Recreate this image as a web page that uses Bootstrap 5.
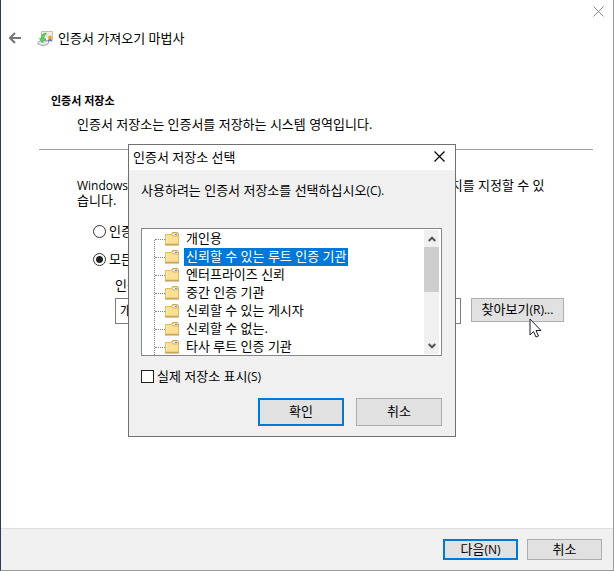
<!DOCTYPE html>
<html lang="ko">
<head>
<meta charset="utf-8">
<meta name="viewport" content="width=device-width, initial-scale=1">
<title>인증서 가져오기 마법사</title>
<link href="https://cdn.jsdelivr.net/npm/bootstrap@5.3.0/dist/css/bootstrap.min.css" rel="stylesheet">
<style>
  body { font: 13px/18px "Open Sans", "Noto Sans CJK KR", sans-serif; color: #000; background: #fff; }
  .latin-s { font-size: 12px; }
  .wizard { border: 1px solid #9b9b9b; border-width: 0 1px 1px; border-left-color: #2b3a55; }
  .top-strip { height: 24px; padding: 6px 9px 0; }
  .plain-btn { border: 0; padding: 0; background: none; line-height: 0; }
  .head { height: 28px; padding-left: 8px; gap: 16px; }
  .content { padding: 40px 20px 0 38px; }
  .section-title { font-size: 11px; line-height: 18px; font-weight: 700; margin: 0; padding-left: 12px; }
  .section-text { margin: 5px 0 0; padding-left: 38px; }
  .rule { border: 0; border-top: 1px solid #a0a0a0; opacity: 1; margin: 16px 0 0; }
  .options { padding: 28px 29px 0 38px; }
  .options p { line-height: 15px; margin: 0 14px 0 0; }
  .choice { height: 18px; gap: 3px; margin-left: 16px; }
  .choice input { appearance: none; width: 13px; height: 13px; margin: 0; border: 1px solid #333; border-radius: 50%; background: #fff; flex: none; }
  .choice input:checked { background: radial-gradient(circle, #222 0 3px, #fff 4px); }
  .choice-first { margin-top: 14px; }
  .choice-next { margin-top: 10px; }
  .store { padding: 8px 0 0 38px; }
  .store-row { gap: 10px; margin-top: 4px; }
  .store input { min-width: 0; height: 26px; border: 1px solid #7a7a7a; border-radius: 0; padding: 0 4px 4px; font-size: 13px; color: #000; }
  .win-btn { border: 1px solid #adadad; border-radius: 0; background: #e1e1e1; color: #000; padding: 0 0 2px; font-size: 13px; line-height: 18px; }
  .win-btn.main { border: 2px solid #0078d7; }
  .win-btn.browse { width: 93px; height: 24px; flex: none; }
  .foot { background: #f0f0f0; border-top: 1px solid #dfdfdf; height: 42px; padding: 0 11px; gap: 9px; }
  .foot .win-btn { width: 75px; height: 21px; line-height: 16px; }
  .picker { position: absolute; left: 127px; top: 144px; width: 328px; background: #f0f0f0; border: 1px solid #707070; z-index: 2; }
  .picker-title { background: #fff; height: 25px; padding: 0 10px 2px 4px; }
  .picker-title h2 { font-size: 13px; line-height: 18px; font-weight: 400; margin: 0; }
  .picker-body { padding: 11px 13px 10px 12px; }
  .tree-box { margin-top: 28px; height: 128px; border: 1px solid #828790; background: #fff; padding: 1px 2px 0 12px; }
  .tree { line-height: 16px; margin: 0; background: repeating-linear-gradient(#808080 0 1px, transparent 1px 2px) 0 10px / 1px 100% no-repeat; }
  .tree li { height: 18px; padding-left: 1px; }
  .tree li::before { content: ""; width: 10px; align-self: center; border-top: 1px dotted #808080; flex: none; }
  .tree svg { margin: 0 5px 0 0; flex: none; }
  .tree span { padding: 0 2px 2px; }
  .tree .chosen span { background: #0078d7; color: #fff; }
  .scroller { width: 15px; background: #f0f0f0; margin-bottom: 1px; }
  .scroller button { height: 17px; }
  .thumb { height: 45px; background: #cdcdcd; }
  .show-real { margin-top: 11px; gap: 3px; }
  .show-real input { appearance: none; width: 13px; height: 13px; margin: 0; border: 1px solid #222; background: #fff; }
  .picker-actions { gap: 12px; margin-top: 12px; }
  .picker-actions .win-btn { width: 86px; height: 28px; }
  .pointer { position: absolute; left: 528px; top: 318px; z-index: 3; }
</style>
<script src="https://cdn.jsdelivr.net/npm/bootstrap@5.3.0/dist/js/bootstrap.bundle.min.js"></script>
</head>
<body>
<svg width="0" height="0" class="position-absolute" aria-hidden="true">
  <symbol id="folder" viewBox="0 0 14 14">
    <path d="M6 3.5L7.5 .5H12.5L13.5 2V5H6Z" fill="#f3dc9a" stroke="#c9a659"/>
    <path d="M8 2.5H12.500" stroke="#fff"/><path d="M10 2.500H12" stroke="#4f9ac4"/>
    <path d="M.5 2.5H6.5L8 4H13.5V12.5H.5Z" fill="#fadf94" stroke="#dcba6a"/>
    <path d="M1.5 4V11.5" stroke="#fff0b8"/><path d="M1 11.5H13" stroke="#f3cf7c"/>
    <path d="M0 13H14" stroke="#b99146"/>
  </symbol>
</svg>
<div class="wizard min-vh-100 d-flex flex-column position-relative">
  <div class="top-strip d-flex justify-content-end align-items-start">
    <button type="button" class="plain-btn" aria-label="닫기"><svg width="11" height="11" viewBox="0 0 11 11"><path d="M.5 .5L10.500 10.500M10.500 .5L.5 10.500" stroke="#888" fill="none"/></svg></button>
  </div>
  <header class="head d-flex align-items-center">
    <button type="button" class="plain-btn" aria-label="뒤로"><svg width="12" height="12" viewBox="0 0 12 12"><path d="M12 6H1.200M6 1L1 6L6 11" stroke="#757575" stroke-width="2" fill="none"/></svg></button>
    <div class="d-flex align-items-center gap-1">
      <svg width="17" height="17" viewBox="0 0 17 17" aria-hidden="true">
        <path d="M4.500 1.500H15.500V10.500H4.500Z" fill="#f5f1e6" stroke="#c7bfad"/>
        <path d="M8 4H13M9 6H11" stroke="#e4dccd"/>
        <path d="M1 12L5 10L12 11L11 14L6 16L1 14Z" fill="#d3d7d8" stroke="#9aa0a0" stroke-width=".8"/>
        <path d="M2 12.500L7 14L11 12" stroke="#f7f8f8" fill="none"/>
        <path d="M8 3C5 4 4 6 4.500 8.500L2.500 8.500L5 12.500L9 9L7 8.700C6.500 7 7.500 5 9.500 3.500Z" fill="#5bd45f" stroke="#2fa843" stroke-width=".6"/>
        <path d="M12 8L11 12L13 10.500L15 12L14 8Z" fill="#4263bd"/>
        <circle cx="13" cy="7.500" r="2" fill="#eea52c"/>
      </svg>
      <span>인증서 가져오기 마법사</span>
    </div>
  </header>
  <main class="content flex-grow-1">
    <h1 class="section-title">인증서 저장소</h1>
    <p class="section-text">인증서 저장소는 인증서를 저장하는 시스템 영역입니다.</p>
    <hr class="rule">
    <form class="options">
      <p><span class="latin-s">Windows</span>가 자동으로 인증서 저장소를 선택하거나 사용자가 인증서 위치를 지정할 수 있습니다.</p>
      <div class="choice choice-first d-flex align-items-center"><input type="radio" name="where" id="auto"><label for="auto">인증서 종류 기준으로 자동 선택</label></div>
      <div class="choice choice-next d-flex align-items-center"><input type="radio" name="where" id="manual" checked><label for="manual">모든 인증서를 다음 저장소에 저장</label></div>
      <div class="store">
        <label for="store" class="d-block">인증서 저장소:</label>
        <div class="store-row d-flex align-items-start">
          <input id="store" type="text" class="flex-grow-1" value="개인용" readonly>
          <button type="button" class="win-btn browse">찾아보기<span class="latin-s">(R)...</span></button>
        </div>
      </div>
    </form>
  </main>
  <footer class="foot d-flex align-items-center justify-content-end">
    <button type="button" class="win-btn main">다음<span class="latin-s">(N)</span></button>
    <button type="button" class="win-btn">취소</button>
  </footer>

  <section class="picker" role="dialog" aria-labelledby="picker-name">
    <div class="picker-title d-flex align-items-center justify-content-between">
      <h2 id="picker-name">인증서 저장소 선택</h2>
      <button type="button" class="plain-btn" aria-label="닫기"><svg width="11" height="11" viewBox="0 0 11 11"><path d="M.5 .5L10.500 10.500M10.500 .5L.5 10.500" stroke="#000" stroke-width="1.200" fill="none"/></svg></button>
    </div>
    <div class="picker-body">
      <div>사용하려는 인증서 저장소를 선택하십시오<span class="latin-s">(C).</span></div>
      <div class="tree-box d-flex">
        <ul class="tree list-unstyled flex-grow-1">
          <li class="d-flex align-items-center"><svg width="14" height="14"><use href="#folder"/></svg><span>개인용</span></li>
          <li class="d-flex align-items-center chosen"><svg width="14" height="14"><use href="#folder"/></svg><span>신뢰할 수 있는 루트 인증 기관</span></li>
          <li class="d-flex align-items-center"><svg width="14" height="14"><use href="#folder"/></svg><span>엔터프라이즈 신뢰</span></li>
          <li class="d-flex align-items-center"><svg width="14" height="14"><use href="#folder"/></svg><span>중간 인증 기관</span></li>
          <li class="d-flex align-items-center"><svg width="14" height="14"><use href="#folder"/></svg><span>신뢰할 수 있는 게시자</span></li>
          <li class="d-flex align-items-center"><svg width="14" height="14"><use href="#folder"/></svg><span>신뢰할 수 없는.</span></li>
          <li class="d-flex align-items-center"><svg width="14" height="14"><use href="#folder"/></svg><span>타사 루트 인증 기관</span></li>
        </ul>
        <div class="scroller d-flex flex-column">
          <button type="button" class="plain-btn" aria-label="위로"><svg width="8" height="6" viewBox="0 0 8 6"><path d="M.7 5L4 1.700L7.300 5" stroke="#555" stroke-width="2" fill="none"/></svg></button>
          <div class="thumb"></div>
          <button type="button" class="plain-btn mt-auto" aria-label="아래로"><svg width="8" height="6" viewBox="0 0 8 6"><path d="M.7 1L4 4.300L7.300 1" stroke="#555" stroke-width="2" fill="none"/></svg></button>
        </div>
      </div>
      <div class="show-real d-flex align-items-center"><input type="checkbox" id="real"><label for="real">실제 저장소 표시<span class="latin-s">(S)</span></label></div>
      <div class="picker-actions d-flex justify-content-end">
        <button type="button" class="win-btn main">확인</button>
        <button type="button" class="win-btn">취소</button>
      </div>
    </div>
  </section>
  <svg class="pointer" width="13" height="20" viewBox="0 0 13 20" aria-hidden="true"><path d="M1 1V17L4.500 13.500L7 19L9.500 18L7 12.500H12Z" fill="#fff" stroke="#1c1c28"/></svg>
</div>
</body>
</html>
